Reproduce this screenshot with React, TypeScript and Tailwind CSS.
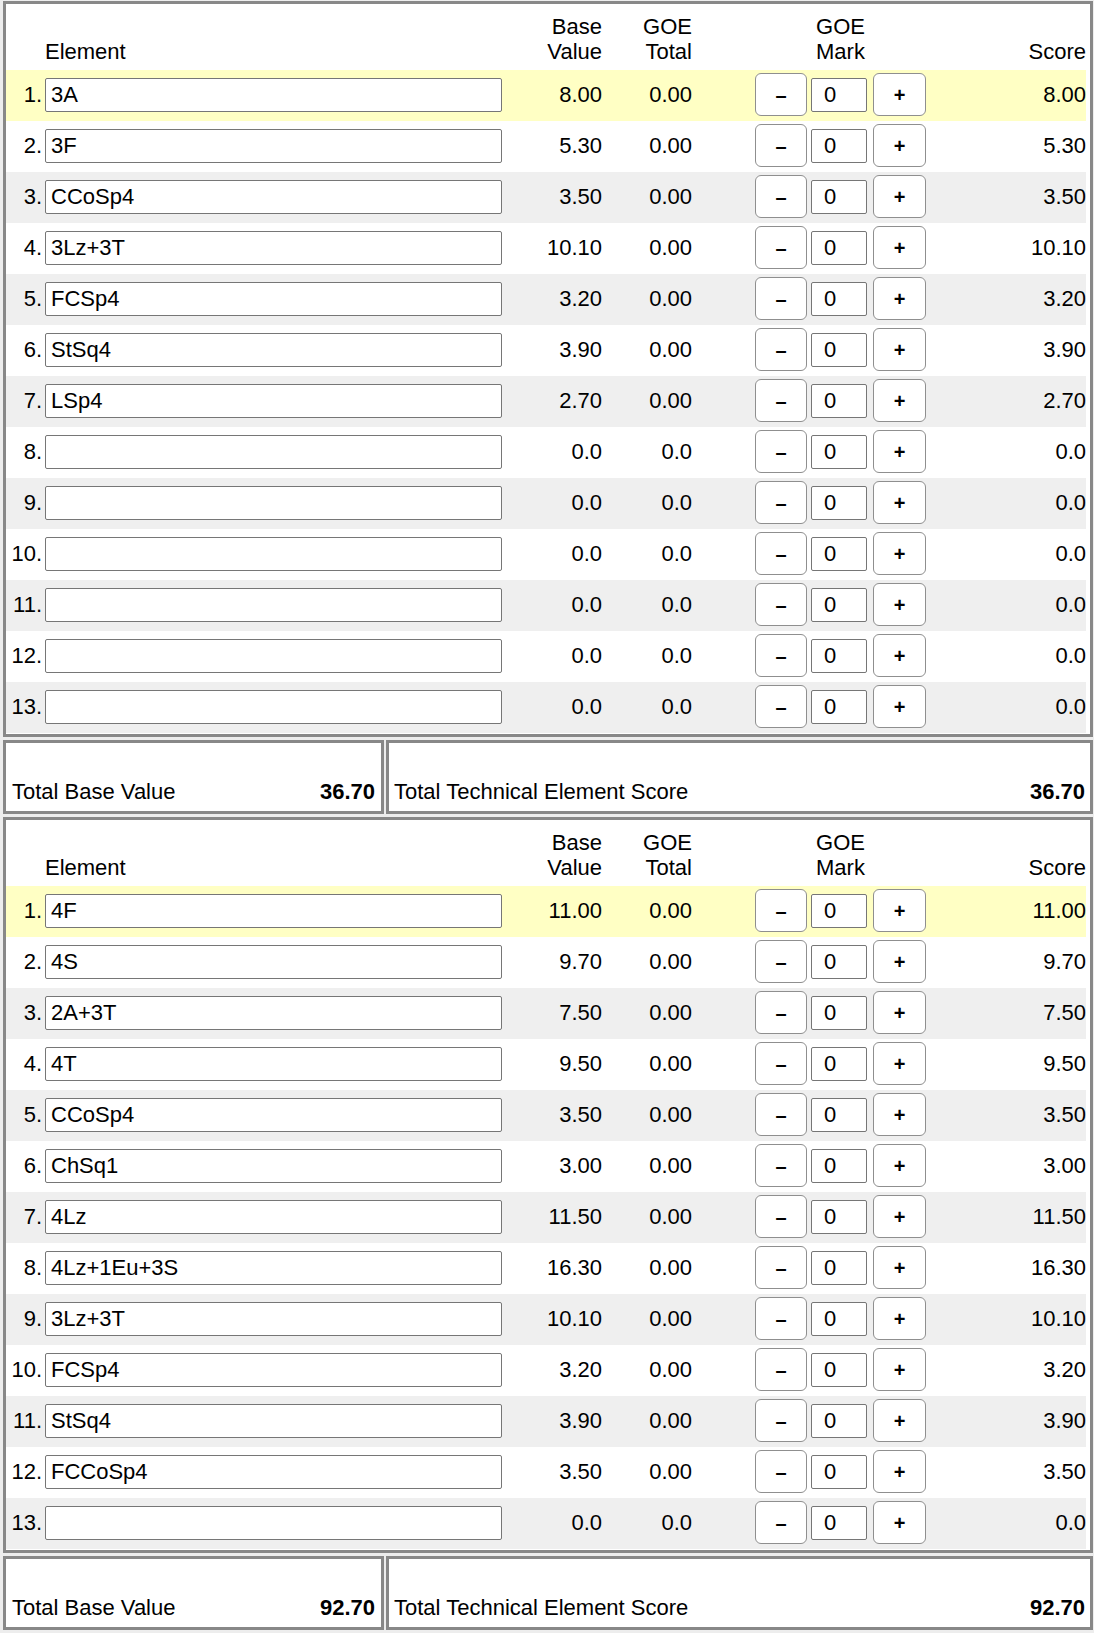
import React from 'react';

type Row = { name: string; base: string; goe: string; score: string };

const PROGRAM_ONE: Row[] = [
  { name: '3A', base: '8.00', goe: '0.00', score: '8.00' },
  { name: '3F', base: '5.30', goe: '0.00', score: '5.30' },
  { name: 'CCoSp4', base: '3.50', goe: '0.00', score: '3.50' },
  { name: '3Lz+3T', base: '10.10', goe: '0.00', score: '10.10' },
  { name: 'FCSp4', base: '3.20', goe: '0.00', score: '3.20' },
  { name: 'StSq4', base: '3.90', goe: '0.00', score: '3.90' },
  { name: 'LSp4', base: '2.70', goe: '0.00', score: '2.70' },
  ...Array.from({ length: 6 }, () => ({ name: '', base: '0.0', goe: '0.0', score: '0.0' })),
];

const PROGRAM_TWO: Row[] = [
  { name: '4F', base: '11.00', goe: '0.00', score: '11.00' },
  { name: '4S', base: '9.70', goe: '0.00', score: '9.70' },
  { name: '2A+3T', base: '7.50', goe: '0.00', score: '7.50' },
  { name: '4T', base: '9.50', goe: '0.00', score: '9.50' },
  { name: 'CCoSp4', base: '3.50', goe: '0.00', score: '3.50' },
  { name: 'ChSq1', base: '3.00', goe: '0.00', score: '3.00' },
  { name: '4Lz', base: '11.50', goe: '0.00', score: '11.50' },
  { name: '4Lz+1Eu+3S', base: '16.30', goe: '0.00', score: '16.30' },
  { name: '3Lz+3T', base: '10.10', goe: '0.00', score: '10.10' },
  { name: 'FCSp4', base: '3.20', goe: '0.00', score: '3.20' },
  { name: 'StSq4', base: '3.90', goe: '0.00', score: '3.90' },
  { name: 'FCCoSp4', base: '3.50', goe: '0.00', score: '3.50' },
  { name: '', base: '0.0', goe: '0.0', score: '0.0' },
];

function ElementRow({ index, row }: { index: number; row: Row }) {
  const bg = index === 0 ? 'bg-[#ffffc4]' : index % 2 === 0 ? 'bg-[#efefef]' : 'bg-white';
  return (
    <div className={`flex h-[51px] items-center pb-[2px] ${bg}`}>
      <div className="w-[36px] text-right">{index + 1}.</div>
      <input
        readOnly
        value={row.name}
        className="ml-[3px] h-[34px] w-[457px] rounded-[2px] border border-[#767676] bg-white px-[5px] outline-none"
      />
      <div className="w-[100px] text-right">{row.base}</div>
      <div className="w-[90px] text-right">{row.goe}</div>
      <div className="ml-[63px] flex w-[171px] items-center">
        <button className="h-[43px] w-[52px] rounded-[6px] border border-[#8f8f8f] bg-white text-[20px] font-bold leading-none">
          –
        </button>
        <input
          readOnly
          value="0"
          className="ml-[4px] h-[34px] w-[56px] rounded-[2px] border border-[#767676] bg-white pl-[12px] outline-none"
        />
        <button className="ml-[6px] h-[43px] w-[53px] rounded-[6px] border border-[#8f8f8f] bg-white text-[20px] font-bold leading-none">
          +
        </button>
      </div>
      <div className="w-[160px] text-right">{row.score}</div>
    </div>
  );
}

function ElementTable({ rows }: { rows: Row[] }) {
  return (
    <div className="border-[3px] border-[#888] bg-white pb-[1px] pr-[4px]">
      {/* Header */}
      <div className="flex h-[66px] items-end pb-[6px]">
        <div className="w-[36px]" />
        <div className="ml-[3px] w-[457px]">Element</div>
        <div className="w-[100px] text-right">
          Base
          <br />
          Value
        </div>
        <div className="w-[90px] text-right">
          GOE
          <br />
          Total
        </div>
        <div className="ml-[63px] w-[171px] text-center">
          GOE
          <br />
          Mark
        </div>
        <div className="w-[160px] text-right">Score</div>
      </div>
      {rows.map((row, i) => (
        <ElementRow key={i} index={i} row={row} />
      ))}
    </div>
  );
}

function Totals({ base, score }: { base: string; score: string }) {
  return (
    <div className="mt-[3px] flex gap-[2px]">
      <div className="flex h-[74px] w-[381px] items-end justify-between border-[3px] border-[#888] bg-white px-[6px] pb-[7px]">
        <span>Total Base Value</span>
        <span className="font-bold">{base}</span>
      </div>
      <div className="flex h-[74px] flex-1 items-end justify-between border-[3px] border-[#888] bg-white px-[5px] pb-[7px]">
        <span>Total Technical Element Score</span>
        <span className="font-bold">{score}</span>
      </div>
    </div>
  );
}

export default function App() {
  return (
    <div className="min-h-[1633px] bg-[#ededed] pb-[3px] pl-[3px] pr-[1px] pt-[1px] font-['Liberation_Sans',Arial,sans-serif] text-[22px] leading-[25px] text-black">
      <ElementTable rows={PROGRAM_ONE} />
      <Totals base="36.70" score="36.70" />
      <div className="mt-[3px]">
        <ElementTable rows={PROGRAM_TWO} />
      </div>
      <Totals base="92.70" score="92.70" />
    </div>
  );
}
